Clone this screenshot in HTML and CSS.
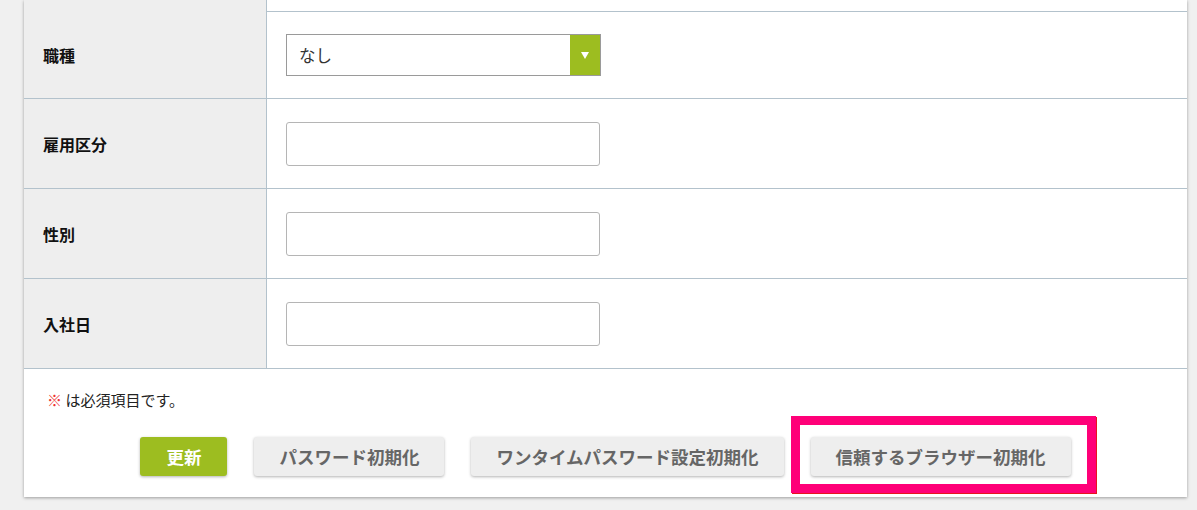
FILE: index.html
```html
<!DOCTYPE html>
<html lang="ja">
<head>
<meta charset="utf-8">
<link rel="stylesheet" href="styles.css">
</head>
<body>
<div class="panel">
  <div class="row row-partial">
    <div class="label"></div>
    <div class="value"></div>
  </div>
  <div class="row row-select">
    <div class="label">職種</div>
    <div class="value">
      <div class="select">
        <span class="select-text">なし</span>
        <span class="select-arrow"><span class="tri"></span></span>
      </div>
    </div>
  </div>
  <div class="row">
    <div class="label">雇用区分</div>
    <div class="value"><div class="input"></div></div>
  </div>
  <div class="row">
    <div class="label">性別</div>
    <div class="value"><div class="input"></div></div>
  </div>
  <div class="row">
    <div class="label">入社日</div>
    <div class="value"><div class="input"></div></div>
  </div>
  <div class="footer">
    <p class="note"><span class="req">※</span> は必須項目です。</p>
    <div class="buttons">
      <button class="btn btn-primary">更新</button>
      <button class="btn">パスワード初期化</button>
      <button class="btn">ワンタイムパスワード設定初期化</button>
      <button class="btn">信頼するブラウザー初期化</button>
    </div>
  </div>
</div>
<div class="highlight"></div>
</body>
</html>
```

FILE: styles.css
```css
html, body {
  margin: 0;
  padding: 0;
}
body {
  background: #f0f0f0;
  font-family: "Noto Sans CJK JP", "Noto Sans", sans-serif;
  color: #222;
  width: 1197px;
  height: 510px;
  overflow: hidden;
  position: relative;
}
.panel {
  margin-left: 24px;
  width: 1163px;
  background: #fff;
  box-shadow: 0 1px 3px rgba(0, 0, 0, 0.35);
}
.row {
  display: grid;
  grid-template-columns: 243px 1fr;
  border-bottom: 1px solid #b3c2cc;
}
.row-partial {
  height: 11px;
}
.label {
  background: #eeeeee;
  border-right: 1px solid #b3c2cc;
  display: flex;
  align-items: center;
  padding-left: 19px;
  font-size: 16px;
  font-weight: bold;
  color: #111;
}
.value {
  padding: 23px 19px 22px;
}
.row-select .value {
  padding: 22px 19px 22px;
}
.select {
  width: 315px;
  height: 42px;
  box-sizing: border-box;
  border: 1px solid #9a9a9a;
  display: flex;
  align-items: stretch;
  background: #fff;
}
.select-text {
  flex: 1;
  display: flex;
  align-items: center;
  padding-left: 12px;
  font-size: 16.5px;
  color: #333;
}
.select-arrow {
  width: 30px;
  background: #9dbd20;
  display: flex;
  align-items: center;
  justify-content: center;
}
.tri {
  width: 0;
  height: 0;
  border-left: 4px solid transparent;
  border-right: 4px solid transparent;
  border-top: 7px solid #fff;
}
.input {
  width: 314px;
  height: 44px;
  box-sizing: border-box;
  border: 1px solid #b5b5b5;
  border-radius: 3px;
  background: #fff;
}
.footer {
  padding: 20px 23px 21px;
}
.note {
  margin: 0;
  font-size: 15px;
  line-height: 22px;
  color: #222;
}
.req {
  color: #e33;
}
.buttons {
  margin-top: 26px;
  display: flex;
  justify-content: center;
  gap: 27px;
}
.btn {
  height: 39px;
  padding: 0 25px;
  border: none;
  border-radius: 3px;
  background: #eeeeee;
  color: #666;
  font-family: "Noto Sans CJK JP", "Noto Sans", sans-serif;
  font-size: 17.5px;
  font-weight: bold;
  box-shadow: 0 1px 3px rgba(0, 0, 0, 0.3);
  cursor: pointer;
}
.btn-primary {
  background: #9dbd20;
  color: #fff;
  padding: 0 26px;
}
.highlight {
  position: absolute;
  left: 791px;
  top: 416px;
  width: 305px;
  height: 77px;
  box-sizing: border-box;
  border: 9px solid #ff0078;
  box-shadow: 1px 1px 0 #e8141e;
}
```
